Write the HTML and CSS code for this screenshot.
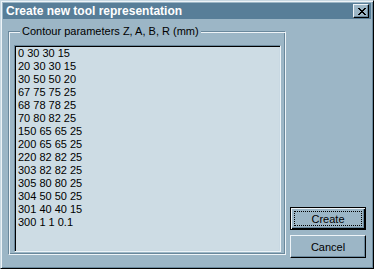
FILE: index.html
```html
<!DOCTYPE html>
<html lang="en">
<head>
    <meta charset="UTF-8">
    <title>Create new tool representation</title>
    <link rel="stylesheet" href="styles.css">
</head>
<body>
    <div class="window">
        <div class="titlebar">
            <span class="title">Create new tool representation</span>
            <button class="close-btn">
                <svg width="8" height="7" viewBox="0 0 8 7" shape-rendering="crispEdges">
                    <path d="M0 0h2v1H0z M6 0h2v1H6z M1 1h2v1H1z M5 1h2v1H5z M2 2h4v1H2z M3 3h2v1H3z M2 4h4v1H2z M1 5h2v1H1z M5 5h2v1H5z M0 6h2v1H0z M6 6h2v1H6z" fill="#000"/>
                </svg>
            </button>
        </div>

        <div class="dialog-body">
            <fieldset class="group">
                <legend>Contour parameters Z, A, B, R (mm)</legend>
                <div class="edit-box">0 30 30 15
20 30 30 15
30 50 50 20
67 75 75 25
68 78 78 25
70 80 82 25
150 65 65 25
200 65 65 25
220 82 82 25
303 82 82 25
305 80 80 25
304 50 50 25
301 40 40 15
300 1 1 0.1</div>
            </fieldset>

            <div class="buttons">
                <button class="btn default"><span class="focus">Create</span></button>
                <button class="btn">Cancel</button>
            </div>
        </div>
    </div>
</body>
</html>
```

FILE: styles.css
```css
* {
    margin: 0;
    padding: 0;
    box-sizing: border-box;
}

body {
    font-family: 'Liberation Sans', Arial, sans-serif;
    font-size: 11px;
    background: #9cb6c6;
}

.window {
    width: 374px;
    height: 269px;
    background: #9cb6c6;
    border: 1px solid;
    border-color: #c8d8e2 #000 #000 #c8d8e2;
    box-shadow: inset 1px 1px #eef4f8, inset -1px -1px #6a889c;
    padding: 2px;
    display: flex;
    flex-direction: column;
}

.titlebar {
    height: 16px;
    background: #587e98;
    display: flex;
    align-items: center;
    justify-content: space-between;
    padding-left: 3px;
}

.title {
    color: #fff;
    font-weight: bold;
    font-size: 12px;
    line-height: 16px;
}

.close-btn {
    width: 16px;
    height: 14px;
    margin-right: 2px;
    background: #9cb6c6;
    border: 1px solid;
    border-color: #eef4f8 #000 #000 #eef4f8;
    box-shadow: inset -1px -1px #6a889c;
    display: flex;
    align-items: center;
    justify-content: center;
    padding-left: 1px;
}

.dialog-body {
    flex: 1;
    display: flex;
}

.group {
    width: 278px;
    margin: 6px 0 11px 5px;
    border: 1px solid;
    border-color: #6a889c #eef4f8 #eef4f8 #6a889c;
    box-shadow: inset 1px 1px #eef4f8, inset -1px -1px #6a889c;
    padding: 7px 4px 2px 5px;
    display: flex;
    flex-direction: column;
}

.group legend {
    margin-left: 6px;
    padding: 0 2px;
    line-height: 13px;
    color: #000;
    background: #9cb6c6;
}

.edit-box {
    flex: 1;
    background: #cddce4;
    border: 1px solid;
    border-color: #6a889c #eef4f8 #eef4f8 #6a889c;
    box-shadow: inset 1px 1px #000, inset -1px -1px #c8d8e2;
    padding: 1px 3px;
    line-height: 13px;
    white-space: pre;
    color: #000;
}

.buttons {
    display: flex;
    flex-direction: column;
    justify-content: flex-end;
    gap: 5px;
    margin-left: 4px;
    padding-bottom: 8px;
}

.btn {
    width: 76px;
    height: 23px;
    font-family: 'Liberation Sans', Arial, sans-serif;
    font-size: 11px;
    color: #000;
    background: #9cb6c6;
    border: 1px solid;
    border-color: #eef4f8 #000 #000 #eef4f8;
    box-shadow: inset -1px -1px #6a889c;
    display: flex;
    align-items: center;
    justify-content: center;
}

.btn.default {
    border: 1px solid #000;
    box-shadow: inset 1px 1px #eef4f8, inset -1px -1px #000, inset -2px -2px #6a889c;
    padding: 3px;
}

.btn .focus {
    width: 100%;
    height: 100%;
    border: 1px dotted #000;
    display: flex;
    align-items: center;
    justify-content: center;
}
```
